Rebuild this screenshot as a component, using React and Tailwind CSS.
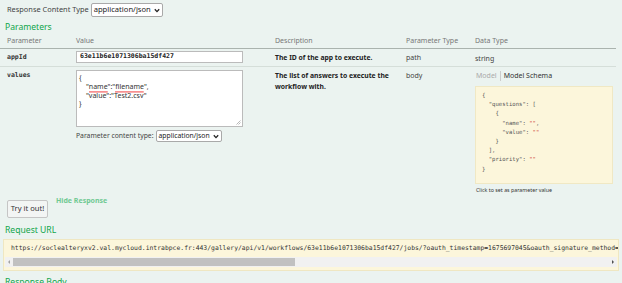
import React from "react";

function Chevron() {
  return (
    <svg width="6" height="5" viewBox="0 0 6 5" className="ml-[3px]">
      <path d="M0.8 1.2 L3 3.6 L5.2 1.2" fill="none" stroke="#222" strokeWidth="1.3" />
    </svg>
  );
}

function Select({ className = "" }) {
  return (
    <div className={"flex items-center bg-white border border-[#a9a9a9] rounded-[2px] px-[2px] text-[#222] " + className}>
      <span>application/json</span>
      <Chevron />
    </div>
  );
}

function Squiggle({ children, id }) {
  return (
    <span className="relative inline-block">
      {children}
      <svg className="absolute left-0 bottom-[-1px] w-full h-[2px]" height="2">
        <defs>
          <pattern id={id} width="2" height="2" patternUnits="userSpaceOnUse">
            <path d="M0 1.7 L1 0.3 L2 1.7" fill="none" stroke="#f03030" strokeWidth="0.9" />
          </pattern>
        </defs>
        <rect x="0" y="0" width="100%" height="2" fill={"url(#" + id + ")"} />
      </svg>
    </span>
  );
}

export default function App() {
  const mono = "font-['DejaVu_Sans_Mono','Liberation_Mono',monospace]";
  return (
    <div className="w-[622px] h-[283px] overflow-hidden bg-[#ebf3f0] font-['Noto_Sans',sans-serif] text-[#333]">
      <div className="pt-[3px] pl-[7px] flex items-center gap-[2px] text-[7.4px] h-[17px]">
        <span className="text-[#444]">Response Content Type</span>
        <Select className="h-[14px] text-[7.6px]" />
      </div>
      <h4 className="pl-[5px] text-[8.6px] leading-[14px] mt-[3px] text-[#10a54a]">Parameters</h4>

      <div className="mt-[1px] w-[616px] grid grid-cols-[76px_199px_131px_69px_141px] text-[7px]">
        <div className="pl-[7px] h-[14px] flex items-center text-[#777] border-b border-[#aab3ae]">Parameter</div>
        <div className="h-[14px] flex items-center text-[#777] border-b border-[#aab3ae]">Value</div>
        <div className="h-[14px] flex items-center text-[#777] border-b border-[#aab3ae]">Description</div>
        <div className="h-[14px] flex items-center text-[#777] border-b border-[#aab3ae]">Parameter Type</div>
        <div className="h-[14px] flex items-center text-[#777] border-b border-[#aab3ae]">Data Type</div>

        <div className={"pl-[7px] h-[18px] pt-[4px] border-b border-[#d5ded9] font-bold text-[6.5px] text-[#333] " + mono}>appId</div>
        <div className="h-[18px] pt-[2px] border-b border-[#d5ded9]">
          <div className={"w-[167px] h-[12px] bg-white border border-[#bbb] flex items-center pl-[3px] font-bold text-[6.5px] text-[#222] " + mono}>
            63e11b6e1071306ba15df427
          </div>
        </div>
        <div className="h-[18px] pt-[4px] border-b border-[#d5ded9] font-bold text-[#222] text-[6.8px]">The ID of the app to execute.</div>
        <div className="h-[18px] pt-[4px] border-b border-[#d5ded9] text-[#444]">path</div>
        <div className="h-[18px] pt-[5px] border-b border-[#d5ded9] text-[#444]">string</div>

        <div className={"pl-[7px] pt-[4px] font-bold text-[6.5px] text-[#333] " + mono}>values</div>
        <div className="pt-[3px]">
          <div className="relative w-[167px] h-[57px] bg-white border border-[#bbb] pl-[2px] pt-[3px] text-[7px] leading-[8.8px] text-[#333]">
            <div>{"{"}</div>
            <div className="pl-[7px]">
              "<Squiggle id="sq1">name</Squiggle>":"<Squiggle id="sq2">filename</Squiggle>",
            </div>
            <div className="pl-[7px]">"value":"Test2.csv"</div>
            <div>{"}"}</div>
            <svg width="5" height="5" viewBox="0 0 5 5" className="absolute right-[1px] bottom-[1px]">
              <path d="M4.5 0.5 L0.5 4.5 M4.5 2.5 L2.5 4.5" stroke="#999" strokeWidth="0.7" />
            </svg>
          </div>
          <div className="flex items-center mt-[3px] gap-[2px] text-[6.8px] text-[#444]">
            <span>Parameter content type:</span>
            <Select className="h-[12px] text-[6.8px]" />
          </div>
        </div>
        <div className="pt-[3px] font-bold text-[#222] text-[6.8px] leading-[11px] pr-[4px]">
          The list of answers to execute the workflow with.
        </div>
        <div className="pt-[4px] text-[#444]">body</div>
        <div className="pt-[4px]">
          <div className="flex items-center h-[10px] text-[7px]">
            <span className="text-[#aaa] pl-[1px]">Model</span>
            <span className="w-px h-[10px] bg-[#ccc] mx-[3px]" />
            <span className="text-[#333]">Model Schema</span>
          </div>
          <div className={"mt-[5px] w-[138px] h-[98px] bg-[#fcf6db] border border-[#f0e8c4] pl-[6px] pt-[4px] text-[5.6px] leading-[9.2px] text-[#555] whitespace-pre " + mono}>
            <div>{"{"}</div>
            <div>{"  \"questions\": ["}</div>
            <div>{"    {"}</div>
            <div>{"      \"name\": "}<span className="text-[#d04437]">""</span>,</div>
            <div>{"      \"value\": "}<span className="text-[#d04437]">""</span></div>
            <div>{"    }"}</div>
            <div>{"  ],"}</div>
            <div>{"  \"priority\": "}<span className="text-[#d04437]">""</span></div>
            <div>{"}"}</div>
          </div>
          <div className="mt-[3px] text-[5.3px] text-[#333] pl-[1px]">Click to set as parameter value</div>
        </div>
      </div>

      <div className="flex items-start pl-[7px] mt-[5px]">
        <div className="w-[41px] h-[18px] border border-[#c5c5c5] rounded-[2px] bg-[#f3f5f4] flex items-center justify-center text-[7.6px] text-[#333]">
          Try it out!
        </div>
        <span className="ml-[8px] -mt-[4px] text-[7px] text-[#6fc992] font-bold">Hide Response</span>
      </div>

      <h4 className="pl-[5px] mt-[5px] text-[8.6px] leading-[14px] text-[#10a54a]">Request URL</h4>
      <div className="mx-[3px] mt-[2px] w-[616px] h-[32px] bg-[#fcf6db] border border-[#efe7c2] overflow-hidden">
        <div className={"pl-[7px] pt-[4px] h-[17px] whitespace-nowrap text-[6.4px] text-[#333] " + mono}>
          https://soclealteryxv2.val.mycloud.intrabpce.fr:443/gallery/api/v1/workflows/63e11b6e1071306ba15df427/jobs/?oauth_timestamp=1675697045&amp;oauth_signature_method=HMAC-SHA1
        </div>
        <div className="mx-[1px] h-[10px] bg-[#f1f1f1] flex items-center">
          <svg width="8" height="10" viewBox="0 0 8 10"><path d="M5 3 L3 5 L5 7 Z" fill="#a3a3a3" /></svg>
          <div className="w-[282px] h-[8px] bg-[#c1c1c1]" />
          <div className="flex-1" />
          <svg width="8" height="10" viewBox="0 0 8 10"><path d="M3 3 L5 5 L3 7 Z" fill="#505050" /></svg>
        </div>
      </div>
      <h4 className="pl-[5px] mt-[4px] text-[8.6px] leading-[14px] text-[#10a54a]">Response Body</h4>
    </div>
  );
}
